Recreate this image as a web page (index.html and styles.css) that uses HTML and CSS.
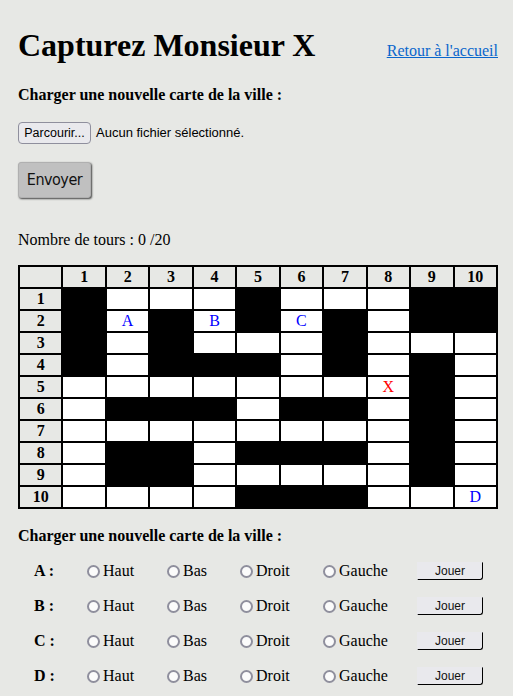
FILE: index.html
```html
<!DOCTYPE html>
<html lang="fr">
<head>
<meta charset="utf-8">
<title>Capturez Monsieur X</title>
<link rel="stylesheet" href="styles.css">
</head>
<body>
<header class="top">
  <h1 class="title">Capturez Monsieur X</h1>
  <a class="home" href="#">Retour à l'accueil</a>
</header>

<h3 class="section">Charger une nouvelle carte de la ville :</h3>
<div class="file-row">
  <button class="browse" type="button">Parcourir...</button>
  <span class="file-name">Aucun fichier sélectionné.</span>
</div>
<button class="send" type="button">Envoyer</button>

<p class="turns">Nombre de tours : 0 /20</p>

<table class="map">
  <tr><th></th><th>1</th><th>2</th><th>3</th><th>4</th><th>5</th><th>6</th><th>7</th><th>8</th><th>9</th><th>10</th></tr>
  <tr><th>1</th><td class="b"></td><td></td><td></td><td></td><td class="b"></td><td></td><td></td><td></td><td class="b"></td><td class="b"></td></tr>
  <tr><th>2</th><td class="b"></td><td class="cop">A</td><td class="b"></td><td class="cop">B</td><td class="b"></td><td class="cop">C</td><td class="b"></td><td></td><td class="b"></td><td class="b"></td></tr>
  <tr><th>3</th><td class="b"></td><td></td><td class="b"></td><td></td><td></td><td></td><td class="b"></td><td></td><td></td><td></td></tr>
  <tr><th>4</th><td class="b"></td><td></td><td class="b"></td><td class="b"></td><td class="b"></td><td></td><td class="b"></td><td></td><td class="b"></td><td></td></tr>
  <tr><th>5</th><td></td><td></td><td></td><td></td><td></td><td></td><td></td><td class="thief">X</td><td class="b"></td><td></td></tr>
  <tr><th>6</th><td></td><td class="b"></td><td class="b"></td><td class="b"></td><td></td><td class="b"></td><td class="b"></td><td></td><td class="b"></td><td></td></tr>
  <tr><th>7</th><td></td><td></td><td></td><td></td><td></td><td></td><td></td><td></td><td class="b"></td><td></td></tr>
  <tr><th>8</th><td></td><td class="b"></td><td class="b"></td><td></td><td class="b"></td><td class="b"></td><td class="b"></td><td></td><td class="b"></td><td></td></tr>
  <tr><th>9</th><td></td><td class="b"></td><td class="b"></td><td></td><td></td><td></td><td></td><td></td><td class="b"></td><td></td></tr>
  <tr><th>10</th><td></td><td></td><td></td><td></td><td class="b"></td><td class="b"></td><td class="b"></td><td></td><td></td><td class="cop">D</td></tr>
</table>

<h3 class="section section-2">Charger une nouvelle carte de la ville :</h3>

<div class="moves">
  <div class="move">
    <span class="who">A :</span>
    <label class="opt"><input type="radio" name="a">Haut</label>
    <label class="opt"><input type="radio" name="a">Bas</label>
    <label class="opt"><input type="radio" name="a">Droit</label>
    <label class="opt"><input type="radio" name="a">Gauche</label>
    <button class="play" type="button">Jouer</button>
  </div>
  <div class="move">
    <span class="who">B :</span>
    <label class="opt"><input type="radio" name="b">Haut</label>
    <label class="opt"><input type="radio" name="b">Bas</label>
    <label class="opt"><input type="radio" name="b">Droit</label>
    <label class="opt"><input type="radio" name="b">Gauche</label>
    <button class="play" type="button">Jouer</button>
  </div>
  <div class="move">
    <span class="who">C :</span>
    <label class="opt"><input type="radio" name="c">Haut</label>
    <label class="opt"><input type="radio" name="c">Bas</label>
    <label class="opt"><input type="radio" name="c">Droit</label>
    <label class="opt"><input type="radio" name="c">Gauche</label>
    <button class="play" type="button">Jouer</button>
  </div>
  <div class="move">
    <span class="who">D :</span>
    <label class="opt"><input type="radio" name="d">Haut</label>
    <label class="opt"><input type="radio" name="d">Bas</label>
    <label class="opt"><input type="radio" name="d">Droit</label>
    <label class="opt"><input type="radio" name="d">Gauche</label>
    <button class="play" type="button">Jouer</button>
  </div>
</div>
</body>
</html>
```
FILE: styles.css
```css
html, body {
  margin: 0;
  background: #e7e8e5;
}
body {
  padding: 27px 15px 0 18px;
  font-family: "Liberation Serif", "Times New Roman", serif;
  font-size: 16px;
  line-height: 18px;
  color: #000;
}

.top {
  display: flex;
  justify-content: space-between;
  align-items: baseline;
}
.title {
  margin: 0;
  font-size: 32px;
  line-height: 37px;
  font-weight: bold;
}
.home {
  color: #0a66cc;
  text-decoration: underline;
  font-size: 16px;
}

.section {
  margin: 21.6px 0 0;
  font-size: 16px;
  line-height: 18px;
  font-weight: bold;
}

.file-row {
  display: flex;
  align-items: center;
  margin-top: 18.4px;
  height: 22px;
  font-family: "Liberation Sans", Arial, sans-serif;
  font-size: 13px;
}
.browse {
  box-sizing: border-box;
  height: 22px;
  width: 73px;
  padding: 0;
  margin: 0 5px 0 0;
  border: 1px solid #8f8f9d;
  border-radius: 4px;
  background: #e9e9ed;
  color: #000;
  font-family: "Liberation Sans", Arial, sans-serif;
  font-size: 12.5px;
}
.file-name {
  color: #000;
}

.send {
  display: block;
  box-sizing: border-box;
  margin-top: 18px;
  width: 73px;
  height: 36px;
  padding: 0;
  border: 1px solid #b0b0b0;
  border-radius: 3px;
  background: #c0c0c0;
  box-shadow: 1px 1px 2px #444;
  color: #111;
  font-family: "DejaVu Sans Condensed", "DejaVu Sans", sans-serif;
  font-stretch: condensed;
  font-size: 16px;
  letter-spacing: -0.5px;
}

.turns {
  margin: 32.6px 0 0;
}

.map {
  margin-top: 16.4px;
  width: 480px;
  table-layout: fixed;
  border-collapse: separate;
  border-spacing: 2px;
  background: #000;
}
.map th,
.map td {
  height: 20px;
  padding: 0;
  text-align: center;
  vertical-align: middle;
  font-size: 16px;
  line-height: 18px;
}
.map th {
  background: #e7e8e5;
  font-weight: bold;
}
.map td {
  background: #fff;
}
.map td.b {
  background: #000;
}
.map td.cop {
  color: #0000ff;
}
.map td.thief {
  color: #ff0000;
}

.section-2 {
  margin-top: 17.6px;
}

.moves {
  margin-top: 9.4px;
  padding-left: 16px;
}
.move {
  display: grid;
  grid-template-columns: 53px 80px 73px 83px 94px 66px;
  align-items: center;
  height: 35px;
}
.who {
  font-weight: bold;
}
.opt {
  display: flex;
  align-items: center;
  gap: 3px;
}
.opt input {
  appearance: none;
  -webkit-appearance: none;
  box-sizing: border-box;
  width: 13px;
  height: 13px;
  margin: 0;
  border: 2px solid #8f8f9d;
  border-radius: 50%;
  background: #fbfbfb;
}
.play {
  box-sizing: border-box;
  width: 66px;
  height: 18px;
  padding: 0;
  margin: 0;
  border: 1px solid #e9e9ed;
  border-right-color: #000;
  border-bottom-color: #000;
  border-radius: 0 0 3px 0;
  background: #e9e9ed;
  color: #111;
  font-family: "Liberation Sans", Arial, sans-serif;
  font-size: 12px;
  line-height: 16px;
}
```
